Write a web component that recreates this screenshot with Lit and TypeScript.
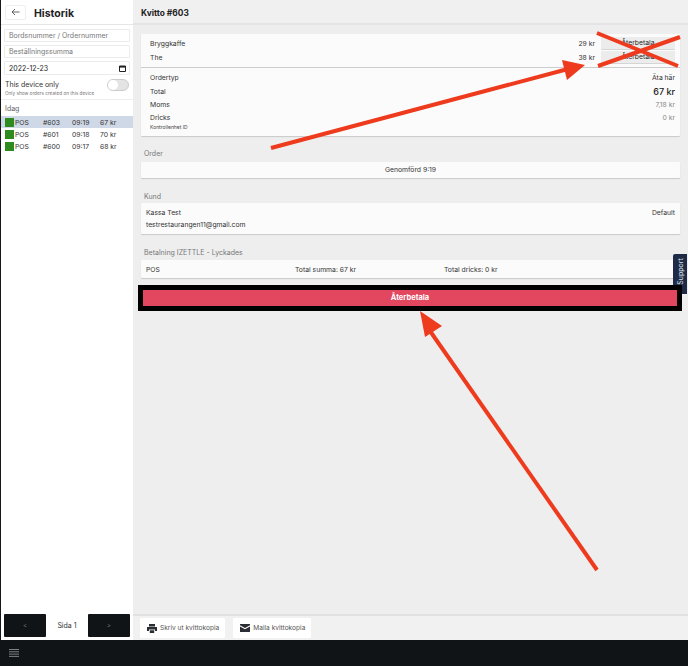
import { LitElement, html, css, svg } from "lit";
import { customElement } from "lit/decorators.js";

const orders = [
  ["#603", "09:19", "67 kr", true],
  ["#601", "09:18", "70 kr", false],
  ["#600", "09:17", "68 kr", false],
] as const;

@customElement("app-root")
export class AppRoot extends LitElement {
  static styles = css`
    :host {
      display: block;
      width: 688px;
      height: 666px;
      position: relative;
      overflow: hidden;
      font-family: Inter, "Liberation Sans", sans-serif;
      color: #222;
      font-size: 6.8px;
      background: #eee;
    }
    * { box-sizing: border-box; }
    .top { display: flex; height: 640px; border-left: 1px solid #15181b; }
    .side { width: 132px; background: #fff; display: flex; flex-direction: column; flex: none; }
    .side-head { height: 25px; display: flex; align-items: center; padding-left: 4px; gap: 8px; border-bottom: 1px solid #e6e6e6; }
    .back { width: 21px; height: 15px; border: 1px solid #eee; border-radius: 2px; display: flex; align-items: center; justify-content: center; }
    .side-head h1 { margin: 2px 0 0; font-size: 10.5px; font-weight: 700; }
    .fields { padding: 4px 3px 0; display: flex; flex-direction: column; gap: 3px; }
    .field { height: 13px; border: 1px solid #ececec; border-radius: 1px; padding-left: 4px; display: flex; align-items: center; justify-content: space-between; color: #777; font-size: 7px; }
    .field.date { color: #222; padding-right: 3px; height: 14px; }
    .device { margin: 5px 3px 0 4px; padding-bottom: 3px; display: flex; align-items: flex-start; justify-content: space-between; }
    .device b { font-weight: 400; font-size: 7px; display: block; line-height: 10px; color: #333; }
    .device small { font-size: 4.7px; color: #777; display: block; line-height: 6px; }
    .toggle { width: 22px; height: 12px; border-radius: 6px; background: #e4e4e4; border: 1px solid #ccc; position: relative; margin: -1px 1px 0 0; }
    .toggle i { position: absolute; left: 0; top: 0; width: 10px; height: 10px; border-radius: 50%; background: #fff; }
    .list { border-top: 1px solid #eee; flex: 1; padding-top: 4px; }
    .list h2 { margin: 0 0 3px 4px; font-weight: 400; font-size: 7px; color: #666; line-height: 9px; }
    .row { display: grid; grid-template-columns: 10px 28px 29px 28px 1fr; align-items: center; height: 12px; padding-left: 4px; font-size: 6.8px; color: #333; }
    .row.on { background: #cfd8e6; }
    .row i { width: 9px; height: 9px; background: #2e8b1f; }
    .pager { display: flex; align-items: center; justify-content: space-between; padding: 0 3px; height: 24px; margin-bottom: 3px; }
    .pager button { width: 42px; height: 23px; background: #111417; border: 0; border-radius: 1px; color: #777; font: 6px Inter, sans-serif; padding: 0; }
    .pager span { font-size: 7px; color: #333; }
    .main { flex: 1; display: flex; flex-direction: column; min-width: 0; }
    .main-head { height: 25px; display: flex; align-items: center; padding: 2px 0 0 8px; font-size: 8.4px; font-weight: 700; border-bottom: 2px solid #e4e4e4; background: #f0f0f0; color: #222; }
    .content { flex: 1; padding: 9px 8px 0; display: flex; flex-direction: column; }
    .card { background: #fbfbfb; box-shadow: 0 1px 1px #c9c9c9; border-radius: 1px; }
    .kv { display: flex; justify-content: space-between; align-items: center; padding: 0 5px 0 9px; height: 14px; color: #333; }
    .items { height: 34px; padding-top: 2px; border-bottom: 1px solid #ccc; }
    .item { display: flex; align-items: center; height: 14px; padding: 0 5px 0 9px; color: #333; }
    .item .name { flex: 1; }
    .item .price { width: 30px; text-align: right; margin-right: 6px; }
    .refund { width: 74px; height: 12px; background: #ececec; border-radius: 1px; box-shadow: 0 1px 0 #d5d5d5; text-align: center; line-height: 12px; color: #222; }
    .facts { padding-top: 3px; height: 68px; }
    .facts .kv { height: 13.4px; }
    .total { font-size: 9px; font-weight: 500; color: #222; }
    .grey { color: #888; }
    .tiny { font-size: 5px; padding-left: 9px; line-height: 6px; margin-top: -1px; color: #444; }
    .label { color: #777; font-size: 7px; line-height: 9px; padding-left: 3px; }
    .status { height: 16px; margin-top: 4.5px; display: flex; align-items: center; justify-content: center; color: #333; padding-bottom: 1px; }
    .customer { height: 31px; margin-top: 2px; padding: 4px 0 0; }
    .customer .kv { height: 12.2px; padding-left: 5px; }
    .pay-label { margin-top: 14px; }
    .pay { height: 18px; margin-top: 3px; display: grid; grid-template-columns: 149px 149px 1fr; align-items: center; padding: 1px 0 0 5px; color: #333; }
    .red { margin: 7px -2px 0 -3px; height: 26px; border: 5px solid #000; background: #e2475f; color: #fff; font-weight: 700; font-size: 7.5px; display: flex; align-items: center; justify-content: center; position: relative; z-index: 1; }
    .bar { height: 26px; border-top: 2px solid #e2e2e2; background: #f1f1f1; display: flex; align-items: center; padding-left: 7px; gap: 8px; flex: none; }
    .btn { height: 20px; background: #fff; border-radius: 1px; display: flex; align-items: center; gap: 3px; padding: 0 6px 0 7px; color: #555; font-size: 6.6px; }
    .footer { height: 26px; background: #111417; display: flex; align-items: center; padding-left: 9px; }
    .support { position: absolute; left: 673px; top: 254px; width: 14px; height: 40px; padding-bottom: 6px; background: #1f2b46; color: #dfe3ea; border-radius: 2px 0 0 2px; display: flex; align-items: center; justify-content: center; }
    .support span { transform: rotate(-90deg); font-size: 7px; white-space: nowrap; }
    .marks { position: absolute; left: 0; top: 0; z-index: 2; }
  `;

  render() {
    return html`
      <div class="top">
        <aside class="side">
          <div class="side-head">
            <div class="back">
              <svg width="9" height="8" viewBox="0 0 9 8" fill="none" stroke="#555" stroke-width="0.9"><path d="M8.5 4H1M4 1 1 4l3 3" /></svg>
            </div>
            <h1>Historik</h1>
          </div>
          <div class="fields">
            <div class="field">Bordsnummer / Ordernummer</div>
            <div class="field">Beställningssumma</div>
            <div class="field date">
              2022-12-23
              <svg width="7" height="7" viewBox="0 0 7 7"><path d="M.5 1h6v5.5h-6z" fill="none" stroke="#222" /><path d="M.5 1h6v1.6h-6z" fill="#222" /></svg>
            </div>
          </div>
          <div class="device">
            <div><b>This device only</b><small>Only show orders created on this device</small></div>
            <div class="toggle"><i></i></div>
          </div>
          <div class="list">
            <h2>Idag</h2>
            ${orders.map(
              ([id, time, sum, on]) => html`
                <div class="row ${on ? "on" : ""}"><i></i><div>POS</div><div>${id}</div><div>${time}</div><div>${sum}</div></div>
              `,
            )}
          </div>
          <div class="pager"><button>&lt;</button><span>Sida 1</span><button>&gt;</button></div>
        </aside>
        <main class="main">
          <div class="main-head">Kvitto #603</div>
          <div class="content">
            <div class="card">
              <div class="items">
                <div class="item"><span class="name">Bryggkaffe</span><span class="price">29 kr</span><span class="refund">Återbetala</span></div>
                <div class="item"><span class="name">The</span><span class="price">38 kr</span><span class="refund">Återbetala</span></div>
              </div>
              <div class="facts">
                <div class="kv"><span>Ordertyp</span><span>Äta här</span></div>
                <div class="kv"><span>Total</span><span class="total">67 kr</span></div>
                <div class="kv"><span>Moms</span><span class="grey">7,18 kr</span></div>
                <div class="kv"><span>Dricks</span><span class="grey">0 kr</span></div>
                <div class="tiny">Kontrollenhet ID</div>
              </div>
            </div>
            <div class="label" style="margin-top:12.5px">Order</div>
            <div class="card status">Genomförd 9:19</div>
            <div class="label" style="margin-top:13.5px">Kund</div>
            <div class="card customer">
              <div class="kv"><span>Kassa Test</span><span>Default</span></div>
              <div class="kv"><span>testrestaurangen11@gmail.com</span></div>
            </div>
            <div class="label pay-label">Betalning IZETTLE - Lyckades</div>
            <div class="card pay"><span>POS</span><span>Total summa: 67 kr</span><span>Total dricks: 0 kr</span></div>
            <div class="red">Återbetala</div>
          </div>
          <div class="bar">
            <div class="btn">
              <svg width="10" height="9" viewBox="0 0 10 9" fill="#2a2d31"><path d="M2 0h6v2.4H2zM0 3h10v4H8V5.5H2V7H0zM2.8 6.2h4.4V9H2.8z" /></svg>
              Skriv ut kvittokopia
            </div>
            <div class="btn">
              <svg width="10" height="8" viewBox="0 0 10 8" fill="#2a2d31"><path d="M0 0h10v1.2L5 4 0 1.2zM0 2.4 5 5.2l5-2.8V8H0z" /></svg>
              Maila kvittokopia
            </div>
          </div>
        </main>
      </div>
      <footer class="footer">
        <svg width="10" height="8" viewBox="0 0 10 8" stroke="#8a8d90" stroke-width="0.9"><path d="M0 .5h10M0 2.8h10M0 5.1h10M0 7.4h10" /></svg>
      </footer>
      <div class="support"><span>Support</span></div>
      <svg class="marks" width="688" height="666" viewBox="0 0 688 666">
        ${svg`
          <g stroke="#ee3a1d" stroke-width="4" fill="none">
            <path d="M597 33 678 66M598 66 680 37" />
            <path d="M271 148 568 69" />
            <path d="M597 570 430 331" />
          </g>
          <path d="M562 60 585 65 567 80z" fill="#ee3a1d" />
          <path d="M420 311 442 326 425 337z" fill="#ee3a1d" />
        `}
      </svg>
    `;
  }
}
